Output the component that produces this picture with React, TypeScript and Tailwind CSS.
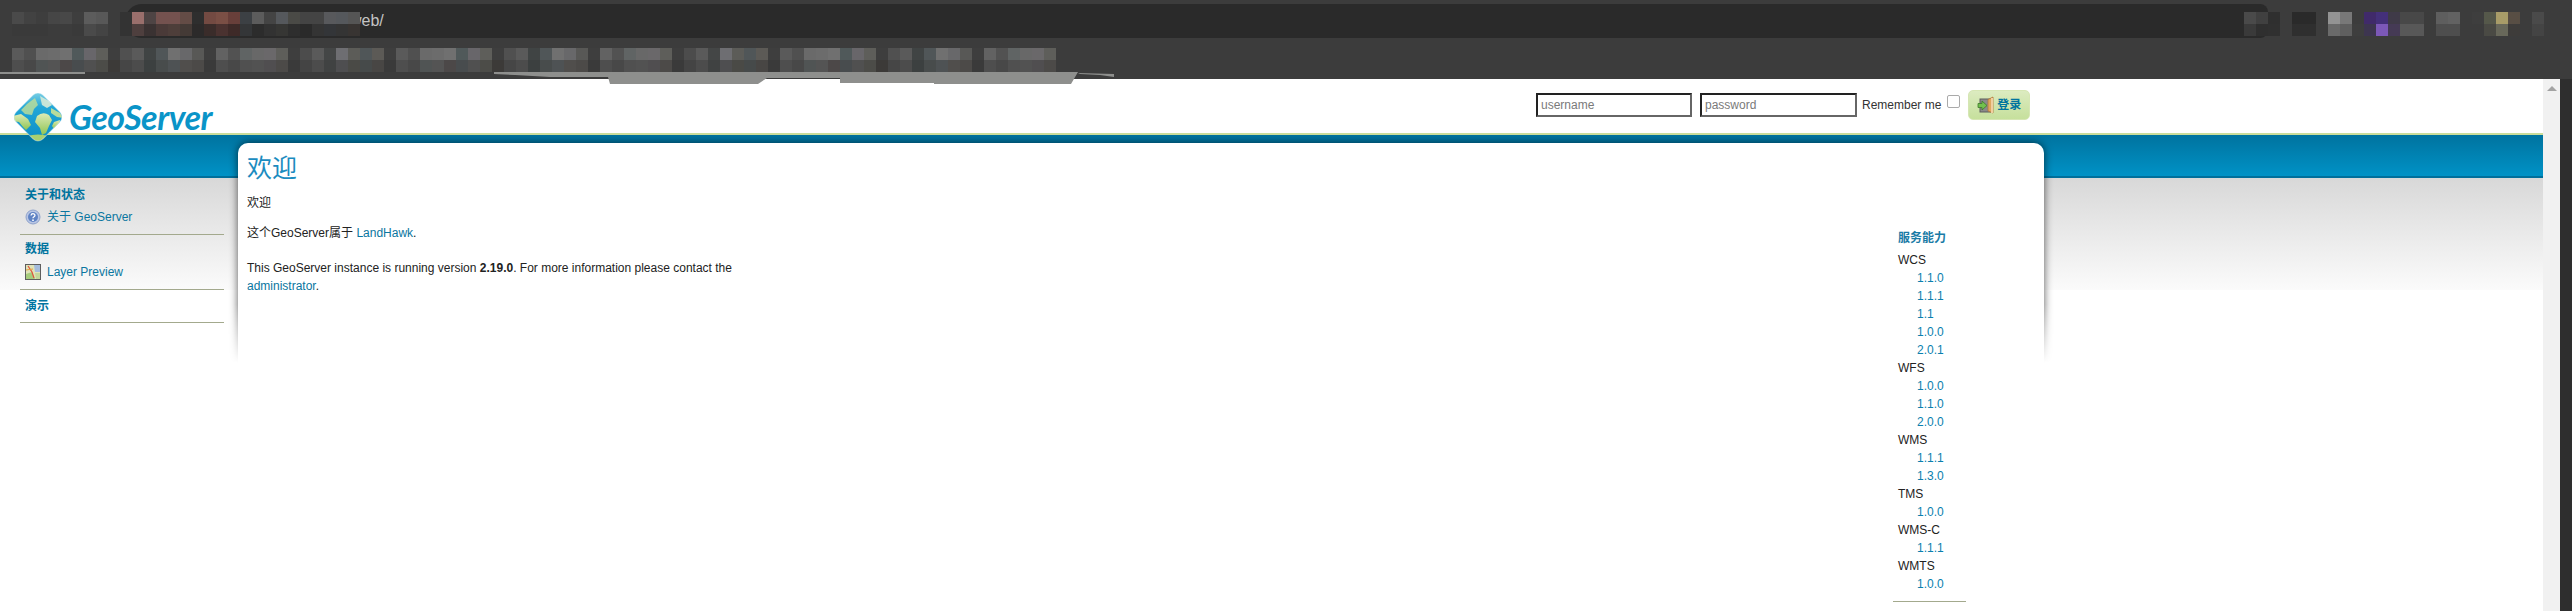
import type { ReactNode } from "react";

const urlTop = [
  "#4a4a4a", "#424242", "#3e3e3e", "#464646", "#484848", "#3e3e3e", "#5c5c5c", "#585858", "#3c3c3c", "#333333",
  "#9a6f6c", "#4e4444", "#74524f", "#74524f", "#644c46", "#2e2e2e", "#734a42", "#7a4f45", "#683f3a", "#3c4044",
  "#5c5c5c", "#444444", "#55585c", "#4a4a46", "#444444", "#444444", "#58595c", "#55585c", "#555555",
];
const urlBottom = [
  "#3a3a3a", "#3a3a3a", "#3a3a3a", "#3c3c3c", "#3c3c3c", "#3a3a3a", "#4a4a4a", "#444444", "#3c3c3c", "#333333",
  "#4e3f3e", "#3a3232", "#4a3a38", "#4e3e3a", "#443a36", "#2c2a2a", "#3a2c2a", "#4a3230", "#3e2a28", "#343638",
  "#2c2c2c", "#323232", "#363634", "#2e2e2e", "#2a2a2a", "#343434", "#333538", "#343434", "#383432",
];
const toolsTop = [
  "#4a4a4a", "#404040", "#2f2f2f", "#3c3c3c", "#2a2a2a", "#2a2a2a", "#3c3c3c", "#939393", "#787878", "#3c3c3c",
  "#402a6a", "#44307a", "#3f3a48", "#484848", "#484848", "#3c3c3c", "#5e5e5e", "#626262", "#3c3c3c", "#3e3e3e",
  "#55584a", "#a89c68", "#584e44", "#3c3c3c", "#4a4a4a",
];
const toolsBottom = [
  "#3a3a3a", "#2f2f2f", "#303030", "#3c3c3c", "#2f2f2f", "#2f2f2f", "#3c3c3c", "#6a6a6a", "#5f5f5f", "#3e3e3e",
  "#3d3550", "#7c58b8", "#453a55", "#585858", "#585858", "#3c3c3c", "#4e4e4e", "#4e4e4e", "#3c3c3c", "#3c3c3c",
  "#4a4a44", "#68685a", "#3e3c3a", "#3c3c3c", "#444444",
];
// bookmark bar mosaic, repeats along the row
const barTop = [
  "#5a5a5a", "#505050", "#6a6a6a", "#6c6c6c", "#707070", "#50595a", "#68666a", "#5e5e5a", "#3e3e3e", "#505050",
  "#5a5a5a", "#404444", "#505658", "#707070", "#68686a", "#585856", "#3e3e3e", "#626262", "#525252", "#606464",
  "#686868", "#6a686a", "#5e5e5a", "#3e3e3e", "#4c4c4c", "#5a5a5a", "#444646", "#6e6e72", "#5c5c58", "#505658",
  "#5c5a56", "#3e3e3e",
];
const barBottom = [
  "#4e4e4e", "#484848", "#505454", "#545454", "#4c4848", "#484c4e", "#505050", "#4c4c48", "#3c3a38", "#464646",
  "#4c4c4c", "#3c4040", "#484c4c", "#4e5254", "#504e4c", "#4c4a48", "#3a3a3a", "#4e4e4e", "#484848", "#505050",
  "#525252", "#504e50", "#4c4a48", "#3a3a3a", "#444444", "#4c4c4c", "#404242", "#4e4e50", "#4a4a46", "#464a4a",
  "#484644", "#3a3a3a",
];
const barCells = Array.from({ length: 87 }, (_, i) => i);

function Mosaic({ top, bottom, className }: { top: string[]; bottom: string[]; className: string }) {
  return (
    <div className={`absolute flex flex-col ${className}`}>
      <div className="flex h-3">
        {top.map((c, i) => (
          <div key={i} className="w-3 h-3" style={{ backgroundColor: c }} />
        ))}
      </div>
      <div className="flex h-3">
        {bottom.map((c, i) => (
          <div key={i} className="w-3 h-3" style={{ backgroundColor: c }} />
        ))}
      </div>
    </div>
  );
}

function BrowserChrome() {
  return (
    <div className="relative z-20 h-[79px] bg-[#3c3c3c] pt-1 pl-[125px] pr-[304px]">
      <div className="h-[34px] rounded-l-[17px] rounded-r-[8px] bg-[#2a2a2a] pl-[214px] flex items-center text-[16px] text-[#c4c4c4]">
        <span className="ml-[11px]">web/</span>
      </div>
      <Mosaic top={urlTop} bottom={urlBottom} className="left-3 top-3" />
      <Mosaic top={toolsTop} bottom={toolsBottom} className="left-[2244px] top-3" />
      <Mosaic
        top={barCells.map((i) => barTop[i % 32])}
        bottom={barCells.map((i) => barBottom[i % 32])}
        className="left-3 top-12"
      />
      <svg className="absolute left-0 top-[72px]" width="1130" height="13" viewBox="0 0 1130 13">
        <path d="M0 0H85V2H0Z" fill="#8e8f8d" />
        <path d="M400 0H1078L1071 12H934V11H840V6H767L758 12H610L608 5H550L515 3L494 2V0Z" fill="#8e8f8d" />
        <path d="M1078 1L1114 2V5L1100 3L1080 2Z" fill="#8e8f8d" />
      </svg>
    </div>
  );
}

function GlobeLogo() {
  return (
    <svg className="shrink-0" width="50" height="50" viewBox="0 0 50 50">
      <defs>
        <clipPath id="geo-diamond">
          <rect x="6" y="6" width="38" height="38" rx="7" transform="rotate(45 25 25)" />
        </clipPath>
        <linearGradient id="geo-sea" x1="0" y1="0" x2="0" y2="1">
          <stop offset="0" stopColor="#7fd0e4" />
          <stop offset="0.3" stopColor="#22a7d8" />
          <stop offset="1" stopColor="#0a8cc4" />
        </linearGradient>
        <linearGradient id="geo-land" x1="0" y1="0" x2="0" y2="1">
          <stop offset="0" stopColor="#dcebb6" />
          <stop offset="1" stopColor="#8fc452" />
        </linearGradient>
      </defs>
      <g clipPath="url(#geo-diamond)">
        <rect width="50" height="50" fill="url(#geo-sea)" />
        <path d="M14 12 L22 6 L25 13 L21 17 L19 23 L12 22 L8 18Z" fill="#b9dc9a" opacity="0.85" />
        <path d="M27 4 L36 9 L39 13 L34 16 L29 13Z" fill="#c7e5d8" />
        <path d="M0 24 L8 22 L15 27 L18 33 L13 38 L10 35 L6 30 L0 29Z" fill="url(#geo-land)" />
        <path d="M24 24 Q30 19 36 23 L39 28 L36 34 L33 41 L29 43 L27 36 L22 30Z" fill="url(#geo-land)" />
        <path d="M38 16 L47 21 L50 26 L44 25 L38 21Z" fill="#b8dc9c" />
        <path d="M41 30 L47 28 L46 34 L41 37 L39 34Z" fill="url(#geo-land)" />
        <path d="M14 44 Q25 41 36 44 L25 50Z" fill="#a7d070" />
      </g>
      <rect
        x="6"
        y="6"
        width="38"
        height="38"
        rx="7"
        transform="rotate(45 25 25)"
        fill="none"
        stroke="#ffffff"
        strokeOpacity="0.35"
      />
    </svg>
  );
}

function DoorIcon() {
  return (
    <svg width="18" height="18" viewBox="0 0 18 18">
      <rect x="3" y="3" width="11" height="13" fill="#8a8a8a" stroke="#5c5c5c" />
      <path d="M11 3.5 L16 1 V17 L11 15Z" fill="#e0a860" stroke="#b0763a" strokeWidth="0.8" />
      <rect x="14" y="2" width="2" height="15" fill="#f0cfa0" />
      <path d="M1 7.5H5V5L10 9.5L5 14V11.5H1Z" fill="#72c04e" stroke="#3d7a2a" strokeWidth="0.8" />
    </svg>
  );
}

function HelpIcon() {
  return (
    <svg width="16" height="16" viewBox="0 0 16 16">
      <circle cx="8" cy="8" r="7" fill="#b9c6e4" stroke="#8fa3cc" />
      <circle cx="8" cy="8" r="5" fill="#5f83c4" />
      <path d="M6 6.5 Q6.2 4.6 8 4.6 Q10 4.7 10 6.3 Q10 7.3 8.7 8 Q8 8.4 8 9.3" fill="none" stroke="#ffffff" strokeWidth="1.3" />
      <circle cx="8" cy="11.2" r="0.9" fill="#ffffff" />
    </svg>
  );
}

function MapIcon() {
  return (
    <svg width="16" height="16" viewBox="0 0 16 16">
      <rect x="0.5" y="0.5" width="15" height="15" fill="#dfe3b8" stroke="#5e5e5e" />
      <path d="M9 1H15V8H10Z" fill="#a5bcdc" />
      <path d="M1 10L7 8L10 15H1Z" fill="#a6cc7c" />
      <path d="M10 9H15V15H11Z" fill="#c3d89a" />
      <path d="M3 2L7 8L9 14" fill="none" stroke="#e0523c" strokeWidth="1.2" />
      <path d="M1 6L8 5" fill="none" stroke="#e8a040" />
    </svg>
  );
}

function NavItem({ icon, children }: { icon: ReactNode; children: ReactNode }) {
  return (
    <a className="flex items-center h-[18px] text-[#0a76a0]">
      <span className="w-[27px] pl-[5px] shrink-0 flex">{icon}</span>
      {children}
    </a>
  );
}

function Sidebar() {
  const head = "h-[18px] leading-[18px] font-bold text-[#00749f] pl-[5px]";
  return (
    <aside className="w-[238px] shrink-0 pl-5 pt-[51px]">
      <div className="w-[204px] border-b border-[#a3a98d] pb-2">
        <h3 className={head}>关于和状态</h3>
        <div className="mt-1">
          <NavItem icon={<HelpIcon />}>关于 GeoServer</NavItem>
        </div>
      </div>
      <div className="w-[204px] border-b border-[#a3a98d] pt-[5px] pb-2">
        <h3 className={head}>数据</h3>
        <div className="mt-[5px]">
          <NavItem icon={<MapIcon />}>Layer Preview</NavItem>
        </div>
      </div>
      <div className="w-[204px] border-b border-[#a3a98d] pt-[7px] pb-[7px]">
        <h3 className={head}>演示</h3>
      </div>
    </aside>
  );
}

const capabilities = [
  { name: "WCS", versions: ["1.1.0", "1.1.1", "1.1", "1.0.0", "2.0.1"] },
  { name: "WFS", versions: ["1.0.0", "1.1.0", "2.0.0"] },
  { name: "WMS", versions: ["1.1.1", "1.3.0"] },
  { name: "TMS", versions: ["1.0.0"] },
  { name: "WMS-C", versions: ["1.1.1"] },
  { name: "WMTS", versions: ["1.0.0"] },
];

function Capabilities() {
  return (
    <div className="w-[73px] shrink-0 pt-[86px]">
      <h3 className="pl-[5px] font-bold text-[#1a7ba6] leading-[18px]">服务能力</h3>
      <ul className="mt-1 pl-[5px] leading-[18px] text-[#222222]">
        {capabilities.map((c) => (
          <li key={c.name}>
            {c.name}
            <ul className="pl-[19px] text-[#0a7fae]">
              {c.versions.map((v, i) => (
                <li key={i}>{v}</li>
              ))}
            </ul>
          </li>
        ))}
      </ul>
      <div className="mt-2 h-px bg-[#a3a98d]" />
    </div>
  );
}

function Panel() {
  return (
    <main className="relative w-[1806px] mt-2">
      {/* drop shadow fades out about 220px below the top of the panel */}
      <div className="absolute -inset-x-4 -top-4 h-[236px] p-4 [mask-image:linear-gradient(to_bottom,black_75%,transparent_100%)]">
        <div className="h-[300px] rounded-t-[10px] shadow-[0_0_8px_rgba(0,0,0,0.65)]" />
      </div>
      <div className="relative flex h-[468px] rounded-t-[10px] bg-white pl-[9px] overflow-hidden">
        <div className="w-[1651px] shrink-0 pt-2 text-[#222222]">
          <h1 className="h-[34px] leading-[34px] text-[25px] text-[#1b8cc0]">欢迎</h1>
          <p className="mt-[9px] leading-[18px]">欢迎</p>
          <p className="mt-3 leading-[18px]">
            这个GeoServer属于 <a className="text-[#0a76a0]">LandHawk</a>.
          </p>
          <p className="mt-[17px] w-[500px] leading-[18px]">
            This GeoServer instance is running version <strong className="font-bold">2.19.0</strong>. For more
            information please contact the <a className="text-[#0a76a0]">administrator</a>.
          </p>
        </div>
        <div className="-ml-[5px]">
          <Capabilities />
        </div>
      </div>
    </main>
  );
}

function Header() {
  return (
    <header className="relative z-10 flex h-[56px] border-b-2 border-[#c9dc9a] bg-white">
      <div className="w-[1536px] shrink-0 flex pl-[13px] pt-[13px] h-[63px]">
        <GlobeLogo />
        <span className="ml-[6px] mt-[7px] h-[36px] leading-[36px] font-['Lato',sans-serif] font-bold italic text-[34px] tracking-[-0.5px] text-[#0a94c8]">
          GeoServer
        </span>
      </div>
      <form className="flex items-center h-[30px] mt-[11px] text-[#333333]">
        <input
          placeholder="username"
          className="w-[156px] h-6 px-[3px] bg-white border-2 border-t-[#222222] border-l-[#222222] border-r-[#666666] border-b-[#666666] text-[12px] placeholder:text-[#7a7a7a] font-['Liberation_Sans',sans-serif]"
        />
        <input
          placeholder="password"
          className="ml-2 w-[157px] h-6 px-[3px] bg-white border-2 border-t-[#222222] border-l-[#222222] border-r-[#666666] border-b-[#666666] text-[12px] placeholder:text-[#7a7a7a] font-['Liberation_Sans',sans-serif]"
        />
        <label className="ml-[5px] whitespace-nowrap">Remember me</label>
        <input
          type="checkbox"
          className="ml-[6px] -mt-[7px] w-[13px] h-[13px] appearance-none rounded-[2px] border border-[#aaaaaa] bg-white"
        />
        <button
          type="button"
          className="ml-2 w-[62px] h-[30px] flex items-center pl-2 gap-[2px] rounded-[5px] border border-[#d6e6b4] bg-gradient-to-b from-[#dcebc0] to-[#c6e09c] font-bold text-[#00749f]"
        >
          <DoorIcon />
          登录
        </button>
      </form>
    </header>
  );
}

export default function App() {
  return (
    <div className="h-[611px] w-[2572px] overflow-hidden bg-white font-['Liberation_Sans','Noto_Sans_CJK_SC',sans-serif] text-[12px]">
      <BrowserChrome />
      <div className="flex h-[532px]">
        <div className="w-[2543px] shrink-0">
          <Header />
          <div className="flex h-[476px] bg-[linear-gradient(to_bottom,#00739f_0px,#0092c6_41px,#006f9b_41px,#006f9b_43px,#d8d8d8_43px,#fbfbfb_155px,#ffffff_155px)]">
            <Sidebar />
            <Panel />
          </div>
        </div>
        <div className="w-[17px] shrink-0 bg-[#f1f1f1] pt-[7px] flex justify-center items-start">
          <div className="w-0 h-0 border-x-[5px] border-x-transparent border-b-[5px] border-b-[#a3a3a3]" />
        </div>
        <div className="flex-1 bg-[#2e2e2e]" />
      </div>
    </div>
  );
}
